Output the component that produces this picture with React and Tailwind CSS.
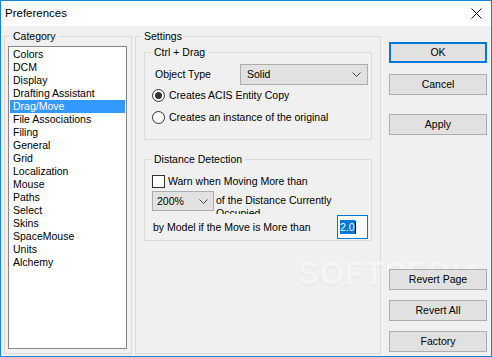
import { useState } from 'react'

const categories = [
  'Colors', 'DCM', 'Display', 'Drafting Assistant', 'Drag/Move', 'File Associations',
  'Filing', 'General', 'Grid', 'Localization', 'Mouse', 'Paths', 'Select', 'Skins',
  'SpaceMouse', 'Units', 'Alchemy',
]

function Chevron() {
  return (
    <svg width="9" height="5" viewBox="0 0 9 5" className="shrink-0">
      <path d="M0.5 0.5 L4.5 4.5 L8.5 0.5" fill="none" stroke="#444" strokeWidth="1" />
    </svg>
  )
}

function Radio({ checked, label }) {
  return (
    <div className="flex items-center h-[16px] ml-[1px]">
      <span className="w-[13px] h-[13px] rounded-full border border-[#333] bg-white flex items-center justify-center">
        {checked && <span className="w-[7px] h-[7px] rounded-full bg-[#333]" />}
      </span>
      <span className="ml-[4px]">{label}</span>
    </div>
  )
}

function Btn({ children, primary, className = '' }) {
  return (
    <button
      className={
        'relative z-10 w-[98px] h-[21px] bg-[#e1e1e1] flex items-center justify-center ' +
        (primary ? 'border-2 border-[#0078d7] ' : 'border border-[#adadad] ') +
        className
      }
    >
      {children}
    </button>
  )
}

export default function App() {
  const [selected, setSelected] = useState('Drag/Move')
  const [copyMode, setCopyMode] = useState('copy')

  return (
    <div className="relative w-[492px] h-[357px] border border-[#1883d7] bg-[#f0f0f0] flex flex-col overflow-hidden text-[10.5px] leading-[13px] text-black font-['Liberation_Sans',Arial,sans-serif]">
      {/* watermark, sits under the controls */}
      <span className="absolute left-[297px] top-[256px] pointer-events-none text-[31px] leading-[34px] font-bold tracking-[1px] text-[#f5f5f5] [text-shadow:0_1px_2px_rgba(0,0,0,0.05)]">
        SOFTPEDIA<sup className="text-[8px]">®</sup>
      </span>

      {/* title bar */}
      <div className="relative h-[25px] bg-white flex items-center justify-between pl-[4px] pr-[9px] shrink-0">
        <span className="text-[11.5px]">Preferences</span>
        <svg width="11" height="11" viewBox="0 0 11 11">
          <path d="M0.5 0.5 L10.5 10.5 M10.5 0.5 L0.5 10.5" stroke="#111" strokeWidth="1" />
        </svg>
      </div>

      <div className="flex flex-1 pl-[3px] pt-[4px]">
        {/* Category */}
        <fieldset className="relative w-[128px] h-[324px] border border-[#dcdcdc] px-[3px]">
          <legend className="ml-[2px] px-[3px] leading-[13px]">Category</legend>
          <div className="mt-[3px] w-[119px] h-[303px] border border-[#828790] bg-white p-[1px]">
            {categories.map((c) => (
              <div
                key={c}
                onClick={() => setSelected(c)}
                className={
                  'h-[13px] leading-[13px] pl-[3px] whitespace-nowrap ' +
                  (c === selected ? 'bg-[#3399ff] text-white' : '')
                }
              >
                {c}
              </div>
            ))}
          </div>
        </fieldset>

        {/* Settings */}
        <fieldset className="ml-[3px] w-[246px] h-[324px] border border-[#dcdcdc] pl-[5px]">
          <legend className="px-[3px] leading-[13px]">Settings</legend>

          <fieldset className="relative ml-[3px] mt-[3px] w-[228px] h-[94px] border border-[#dcdcdc] pl-[6px] pr-[3px]">
            <legend className="px-[3px] leading-[13px]">Ctrl + Drag</legend>
            <div className="flex items-center mt-[5px] h-[21px]">
              <span className="ml-[4px] w-[85px]">Object Type</span>
              <div className="w-[128px] h-[21px] bg-[#e1e1e1] border border-[#adadad] flex items-center justify-between pl-[6px] pr-[6px]">
                <span>Solid</span>
                <Chevron />
              </div>
            </div>
            <div className="mt-[2px]" onClick={() => setCopyMode('copy')}>
              <Radio checked={copyMode === 'copy'} label="Creates ACIS Entity Copy" />
            </div>
            <div className="mt-[6px]" onClick={() => setCopyMode('instance')}>
              <Radio checked={copyMode === 'instance'} label="Creates an instance of the original" />
            </div>
          </fieldset>

          <fieldset className="relative ml-[3px] mt-[13px] w-[228px] h-[88px] border border-[#dcdcdc] pl-[6px] pr-[3px] pb-[1px]">
            <legend className="px-[3px] leading-[13px]">Distance Detection</legend>
            <div className="flex items-center h-[16px] mt-[7px] ml-[1px]">
              <span className="w-[13px] h-[13px] border border-[#333] bg-white" />
              <span className="ml-[3px]">Warn when Moving More than</span>
            </div>
            <div className="flex items-start mt-[2px] ml-[1px]">
              <div className="w-[62px] h-[20px] bg-[#e1e1e1] border border-[#adadad] flex items-center justify-between pl-[4px] pr-[5px]">
                <span>200%</span>
                <Chevron />
              </div>
              <div className="ml-[2px] mt-[3px] h-[20px] overflow-hidden leading-[13px]">
                of the Distance Currently
                <br />
                Occupied
              </div>
            </div>
            <div className="flex items-center justify-between h-[24px] mt-[1px]">
              <span className="ml-[2px]">by Model if the Move is More than</span>
              <div className="w-[31px] h-[24px] border border-[#0078d7] bg-white flex items-center pl-[2px]">
                <span className="bg-[#0078d7] text-white leading-[14px]">2.0</span>
                <span className="w-px h-[13px] bg-black" />
              </div>
            </div>
          </fieldset>
        </fieldset>

        {/* buttons */}
        <div className="ml-[8px] flex flex-col pt-[12px] pb-[4px]">
          <Btn primary>OK</Btn>
          <Btn className="mt-[11px]">Cancel</Btn>
          <Btn className="mt-[19px]">Apply</Btn>
          <Btn className="mt-auto">Revert Page</Btn>
          <Btn className="mt-[10px]">Revert All</Btn>
          <Btn className="mt-[10px]">Factory</Btn>
        </div>
      </div>
    </div>
  )
}
